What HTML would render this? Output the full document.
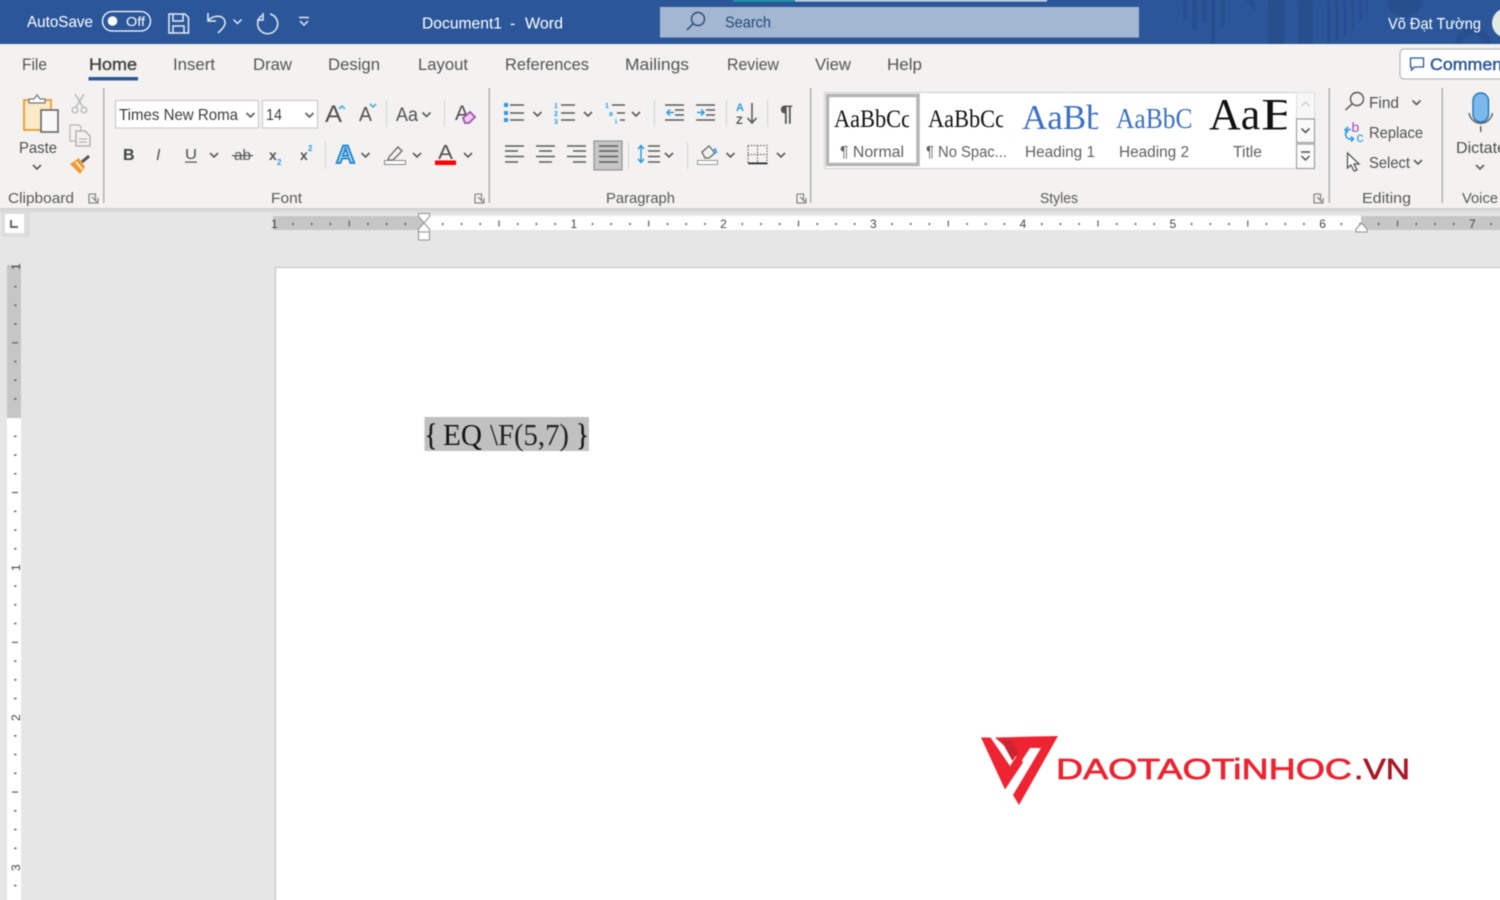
<!DOCTYPE html>
<html><head><meta charset="utf-8"><title>Document1 - Word</title>
<style>
html,body{margin:0;padding:0;width:1500px;height:900px;overflow:hidden;background:#e6e6e6}
#w{position:absolute;left:0;top:0;width:1500px;height:900px;overflow:hidden}
svg{display:block;position:absolute;left:-10px;top:-10px;filter:blur(.45px)}
text{font-family:"Liberation Sans",sans-serif;fill:#505050;font-size:16px}
.t{fill:#fff;font-size:16px}
.g{font-size:14.5px;fill:#5a5a5a}
.tab{font-size:17px;fill:#555}
.sf{font-family:"Liberation Serif",serif}
.ln{fill:none;stroke:#5c5c5c;stroke-width:1.6}
.bl{fill:#2e9ae0}
</style></head><body><div id="w">
<svg width="1520" height="920" viewBox="-10 -10 1520 920" xmlns="http://www.w3.org/2000/svg">
<defs>
<path id="c" d="M-4-2 0 2 4-2" fill="none" stroke="#5a5a5a" stroke-width="1.600"/>
<path id="lc" d="M0 0h6.500v7M0 0v9h9V4M3 3l5 5" fill="none" stroke="#777" stroke-width="1.100"/>
<linearGradient id="sh" x1="0" x2="0" y1="0" y2="1"><stop offset="0" stop-color="#cfcfcf"/><stop offset="1" stop-color="#e6e6e6"/></linearGradient>
<pattern id="rt" patternUnits="userSpaceOnUse" x="424" y="216" width="149.76" height="14">
<rect x="18" y="7" width="1.500" height="2" fill="#555"/><rect x="36.700" y="7" width="1.500" height="2" fill="#555"/><rect x="55.400" y="7" width="1.500" height="2" fill="#555"/><rect x="74.300" y="4.500" width="1.300" height="6" fill="#666"/><rect x="93" y="7" width="1.500" height="2" fill="#555"/><rect x="111.700" y="7" width="1.500" height="2" fill="#555"/><rect x="130.400" y="7" width="1.500" height="2" fill="#555"/>
</pattern>
<pattern id="vt" patternUnits="userSpaceOnUse" x="7" y="417.600" width="14" height="149.76">
<rect x="7" y="18" width="2.500" height="1.500" fill="#666"/><rect x="7" y="36.700" width="2.500" height="1.500" fill="#666"/><rect x="7" y="55.400" width="2.500" height="1.500" fill="#666"/><rect x="5" y="74.300" width="6" height="1.300" fill="#666"/><rect x="7" y="93" width="2.500" height="1.500" fill="#666"/><rect x="7" y="111.700" width="2.500" height="1.500" fill="#666"/><rect x="7" y="130.400" width="2.500" height="1.500" fill="#666"/>
</pattern>
<clipPath id="c1"><rect x="830" y="95" width="79" height="45"/></clipPath>
<clipPath id="c2"><rect x="924" y="95" width="79" height="45"/></clipPath>
<clipPath id="c3"><rect x="1018" y="95" width="80" height="45"/></clipPath>
<clipPath id="c4"><rect x="1112" y="95" width="81" height="45"/></clipPath>
<clipPath id="c5"><rect x="1205" y="92" width="81.500" height="48"/></clipPath>
</defs>

<!-- backgrounds -->
<rect x="-10" y="-10" width="1520" height="920" fill="#e6e6e6"/>
<rect x="-10" y="-10" width="1520" height="54" fill="#2b579a"/>

<!-- title bar decoration -->
<g fill="#274f8d">
<rect x="1183" y="0" width="4.500" height="20"/><rect x="1192" y="0" width="5" height="30"/><rect x="1202" y="0" width="5" height="22"/><rect x="1211" y="0" width="4.500" height="44"/><rect x="1221" y="0" width="4.500" height="26"/>
<path d="M1245 0h10v12zM1268 0h17v44h-17zM1298 0h15v44h-15zM1327 0h3.500v44h-3.500zM1335 0h3.500v40h-3.500zM1343 0h3.500v36h-3.500zM1351 0h3v30h-3zM1359 0h3v20h-3zM1366 0h2v12h-2z"/>
<path d="M1387 0a18 17 0 0 0 36 0z"/>
</g>
<circle cx="1473" cy="46" r="15" fill="none" stroke="#274f8d" stroke-width="7"/>
<rect x="733" y="0" width="62" height="1.500" fill="#17a9a9"/><rect x="795" y="0" width="252" height="1.500" fill="#e8edf5"/>

<rect x="-10" y="44" width="1520" height="164" fill="#f3f2f1"/>
<rect x="-10" y="208" width="1520" height="6" fill="url(#sh)"/>

<!-- title bar -->
<text class="t" x="27" y="27" textLength="66" lengthAdjust="spacingAndGlyphs">AutoSave</text>
<rect x="102.500" y="11.500" width="48" height="19.500" rx="9.700" fill="none" stroke="#fff" stroke-width="1.300"/>
<circle cx="112.500" cy="21" r="4.800" fill="#fff"/>
<text class="t" x="126" y="26" style="font-size:13px" textLength="19" lengthAdjust="spacingAndGlyphs">Off</text>
<path d="M169 14h16l3.500 3.500V33H169zM173 14v7h10v-7M173 33v-7h11v7" fill="none" stroke="#e6ecf5" stroke-width="1.500"/>
<path d="M208 13v8h8M208 21c4-6 16-7 17 1 .5 4-3 7-7 11" fill="none" stroke="#e6ecf5" stroke-width="1.500"/>
<path d="M233.500 19.500l4 4 4-4" fill="none" stroke="#e6ecf5" stroke-width="1.500"/>
<path d="M262 15.500A10 10 0 1 0 270 14M263 13v7h-6" fill="none" stroke="#e6ecf5" stroke-width="1.500"/>
<path d="M299 17.500h10M300 21l4 4 4-4" fill="none" stroke="#e6ecf5" stroke-width="1.500"/>
<text class="t" x="422" y="28.500" textLength="80" lengthAdjust="spacingAndGlyphs">Document1</text>
<text class="t" x="510" y="28.500">-</text>
<text class="t" x="525" y="28.500" textLength="38" lengthAdjust="spacingAndGlyphs">Word</text>
<rect x="660" y="7" width="479" height="30.500" fill="#a3b7d2"/>
<circle cx="698" cy="19" r="6.500" fill="none" stroke="#2b4a78" stroke-width="1.400"/><path d="M693 24l-6 6" stroke="#2b4a78" stroke-width="1.500"/>
<text x="725" y="27.500" textLength="46" lengthAdjust="spacingAndGlyphs" style="fill:#254a7e">Search</text>
<text class="t" x="1388" y="29" textLength="93" lengthAdjust="spacingAndGlyphs" style="font-family:'Liberation Sans','DejaVu Sans',sans-serif">Võ Đạt Tường</text>
<circle cx="1507" cy="23" r="15" fill="#e3ebe2"/>

<!-- tabs -->
<g>
<text class="tab" x="22" y="70" textLength="25" lengthAdjust="spacingAndGlyphs">File</text>
<text class="tab" x="89" y="70" textLength="48" lengthAdjust="spacingAndGlyphs" style="fill:#444;stroke:#444;stroke-width:.4">Home</text>
<rect x="88.500" y="77" width="49.500" height="3.500" fill="#2b579a"/>
<text class="tab" x="173" y="70" textLength="42" lengthAdjust="spacingAndGlyphs">Insert</text>
<text class="tab" x="253" y="70" textLength="39" lengthAdjust="spacingAndGlyphs">Draw</text>
<text class="tab" x="328" y="70" textLength="52" lengthAdjust="spacingAndGlyphs">Design</text>
<text class="tab" x="418" y="70" textLength="50" lengthAdjust="spacingAndGlyphs">Layout</text>
<text class="tab" x="505" y="70" textLength="84" lengthAdjust="spacingAndGlyphs">References</text>
<text class="tab" x="625" y="70" textLength="64" lengthAdjust="spacingAndGlyphs">Mailings</text>
<text class="tab" x="727" y="70" textLength="52" lengthAdjust="spacingAndGlyphs">Review</text>
<text class="tab" x="815" y="70" textLength="36" lengthAdjust="spacingAndGlyphs">View</text>
<text class="tab" x="887" y="70" textLength="35" lengthAdjust="spacingAndGlyphs">Help</text>
</g>
<rect x="1400" y="49" width="130" height="30" rx="4" fill="#fff" stroke="#b9b9b9" stroke-width="1.200"/>
<path d="M1410.500 58h13v9h-9l-3 3v-3h-1z" fill="none" stroke="#2b579a" stroke-width="1.300"/>
<text x="1430" y="70" textLength="86" lengthAdjust="spacingAndGlyphs" style="fill:#2b579a;font-size:17px;stroke:#2b579a;stroke-width:.45">Comments</text>

<!-- separators -->
<g fill="#b3b3b3">
<rect x="103" y="88" width="1.500" height="115"/><rect x="488.500" y="88" width="1.500" height="115"/><rect x="810" y="88" width="1.500" height="115"/><rect x="1328.500" y="88" width="1.500" height="115"/><rect x="1441.500" y="88" width="1.500" height="115"/>
</g>
<g fill="#d4d4d4">
<rect x="386" y="100" width="1" height="27"/><rect x="444" y="100" width="1" height="27"/><rect x="325" y="142" width="1" height="27"/>
<rect x="654" y="100" width="1" height="27"/><rect x="726" y="100" width="1" height="27"/><rect x="767" y="100" width="1" height="27"/><rect x="628" y="142" width="1" height="27"/><rect x="687" y="142" width="1" height="27"/>
</g>

<!-- clipboard -->
<rect x="24" y="100" width="27" height="30" fill="#fce9c8" stroke="#eb9b2d" stroke-width="1.800"/>
<path d="M29 103v-4h5l3-4 3 4h5v4z" fill="#fff" stroke="#777" stroke-width="1.200"/>
<rect x="41" y="110" width="17" height="22" fill="#f8f8f8" stroke="#666" stroke-width="1.600"/>
<text x="19" y="153" textLength="38" lengthAdjust="spacingAndGlyphs" style="font-size:16px">Paste</text>
<use href="#c" x="37" y="167"/>
<path d="M75 94l8 13M84 94l-8 13" stroke="#b8b8b8" stroke-width="1.500" fill="none"/><circle cx="75" cy="110" r="2.800" fill="none" stroke="#b8b8b8" stroke-width="1.300"/><circle cx="84" cy="110" r="2.800" fill="none" stroke="#b8b8b8" stroke-width="1.300"/>
<path d="M70 125h9l2 2v14H70z" fill="#f3f2f1" stroke="#b8b8b8" stroke-width="1.300"/><path d="M76 131h9l5 5v10H76z" fill="#f3f2f1" stroke="#aaa" stroke-width="1.300"/><path d="M79 139h8M79 142h8" stroke="#aaa"/>
<path d="M70 164l9-6 6 9-5 7z" fill="#ee9a36"/><path d="M82 162l7-6" stroke="#555" stroke-width="3"/><path d="M76 162l6 7" stroke="#fff" stroke-width="1.500"/>
<text class="g" x="8" y="203" textLength="66" lengthAdjust="spacingAndGlyphs">Clipboard</text>
<use href="#lc" x="89" y="194"/>

<!-- font -->
<rect x="115.500" y="100.500" width="143" height="27.500" fill="#fff" stroke="#c8c8c8" stroke-width="1.100"/>
<rect x="262.500" y="100.500" width="55" height="27.500" fill="#fff" stroke="#c8c8c8" stroke-width="1.100"/>
<text x="119" y="120" textLength="119" lengthAdjust="spacingAndGlyphs" style="fill:#3d3d3d">Times New Roma</text>
<use href="#c" x="250.500" y="115"/>
<text x="266" y="120" textLength="16" lengthAdjust="spacingAndGlyphs" style="fill:#3d3d3d">14</text>
<use href="#c" x="309.500" y="115"/>
<text x="325" y="122" style="font-size:24px" textLength="17" lengthAdjust="spacingAndGlyphs">A</text>
<path d="M339 109l3-3 3 3" stroke="#3ba1dc" stroke-width="1.500" fill="none"/>
<text x="359" y="121" style="font-size:20px" textLength="13" lengthAdjust="spacingAndGlyphs">A</text>
<path d="M370 104l3 3 3-3" stroke="#3ba1dc" stroke-width="1.500" fill="none"/>
<text x="396" y="121" style="font-size:19px" textLength="22" lengthAdjust="spacingAndGlyphs">Aa</text>
<use href="#c" x="426.500" y="114.500"/>
<text x="455" y="120" style="font-size:21px" textLength="14" lengthAdjust="spacingAndGlyphs">A</text>
<path d="M463 118l7-6 5 5-6 6h-4z" fill="#ead0ee" stroke="#a64fb5" stroke-width="1.800"/>

<text x="123" y="160" style="font-weight:bold;font-size:16px;fill:#444">B</text>
<text x="156" y="160" style="font-style:italic;font-size:16px;fill:#555">I</text>
<text x="185" y="159" style="font-size:15px" textLength="12" lengthAdjust="spacingAndGlyphs">U</text><rect x="185" y="161.500" width="12" height="1.200" fill="#555"/>
<use href="#c" x="214" y="155"/>
<text x="234" y="160" style="font-size:15px" textLength="17" lengthAdjust="spacingAndGlyphs">ab</text><rect x="232" y="155" width="21" height="1.200" fill="#555"/>
<text x="269" y="160" style="font-weight:bold;font-size:14px;fill:#555">x</text><text x="277" y="165" style="font-size:8px;fill:#2e9ae0;font-weight:bold">2</text>
<text x="300" y="160" style="font-weight:bold;font-size:14px;fill:#555">x</text><text x="308" y="151" style="font-size:8px;fill:#2e9ae0;font-weight:bold">2</text>
<text x="336" y="163" style="font-size:25px;font-weight:bold;fill:#bcdcf4;stroke:#1f84cf;stroke-width:1.800" textLength="19" lengthAdjust="spacingAndGlyphs">A</text>
<use href="#c" x="365.500" y="155"/>
<path d="M389 157l9-10 4 4-9 9h-5z" fill="none" stroke="#666" stroke-width="1.300"/><rect x="384.500" y="160.500" width="21" height="4" fill="#fff" stroke="#888"/>
<use href="#c" x="417" y="155"/>
<text x="438" y="159" style="font-size:20px" textLength="15" lengthAdjust="spacingAndGlyphs">A</text>
<rect x="435" y="160.500" width="21" height="4.500" fill="#f00"/>
<use href="#c" x="468" y="155"/>
<text class="g" x="271" y="203" textLength="31" lengthAdjust="spacingAndGlyphs">Font</text>
<use href="#lc" x="475" y="194"/>

<!-- paragraph row 1 -->
<g fill="#2e9ae0"><rect x="504" y="103" width="4" height="4"/><rect x="504" y="111" width="4" height="4"/><rect x="504" y="118" width="4" height="4"/></g>
<path class="ln" d="M510 105h14M510 113h14M510 120h14M561 105h14M561 113h14M561 120h14M612 105h13M617 113h8M620 120h5"/>
<text x="554" y="108" style="font-size:7px;font-weight:bold;fill:#2e9ae0">1</text><text x="554" y="116" style="font-size:7px;font-weight:bold;fill:#2e9ae0">2</text><text x="554" y="124" style="font-size:7px;font-weight:bold;fill:#2e9ae0">3</text>
<text x="605" y="108" style="font-size:7px;font-weight:bold;fill:#2e9ae0">1</text><text x="609" y="116" style="font-size:7px;font-weight:bold;fill:#2e9ae0">a</text><text x="615" y="124" style="font-size:7px;font-weight:bold;fill:#2e9ae0">i</text>
<use href="#c" x="537.500" y="114"/><use href="#c" x="588" y="114"/><use href="#c" x="636" y="114"/>
<path class="ln" d="M665 105h19M675 110h9M675 115h9M665 120h19M696 105h19M706 110h9M706 115h9M696 120h19"/>
<path d="M674 112.500h-7M670 109.500l-3 3 3 3M697 112.500h7M701 109.500l3 3-3 3" fill="none" stroke="#2e9ae0" stroke-width="1.500"/>
<text x="736" y="111" style="font-size:11px;font-weight:bold;fill:#2e9ae0">A</text>
<text x="736" y="124" style="font-size:11px;font-weight:bold;fill:#555">Z</text>
<path d="M752 103v20M747.500 118l4.500 5 4.500-5" fill="none" stroke="#555" stroke-width="1.500"/>
<text x="780" y="121" style="font-size:22px;font-weight:bold;fill:#555" textLength="13" lengthAdjust="spacingAndGlyphs">¶</text>

<!-- paragraph row 2 -->
<rect x="594" y="141" width="28" height="29" fill="#c6c6c6" stroke="#8f8f8f" stroke-width="1.100"/>
<path class="ln" d="M505 146h19M505 151h13M505 156.500h19M505 162h13M536 146h19M539 151h13M536 156.500h19M539 162h13M567 146h19M573 151h13M567 156.500h19M573 162h13M599 146h19M599 151h19M599 156.500h19M599 162h19"/>
<path d="M641 158v-12M638 149l3-3.500 3 3.500M641 152v10M638 159l3 3.500 3-3.500" fill="none" stroke="#2e9ae0" stroke-width="1.500"/>
<path class="ln" d="M648 146h12M648 151h12M648 156.500h12M648 162h12"/>
<use href="#c" x="669" y="155"/>
<path d="M702 152l7-6 6 7-6 5h-4z" fill="none" stroke="#666" stroke-width="1.300"/><path d="M714 153a4 4 0 0 1 1-4l2 4" fill="none" stroke="#2e9ae0" stroke-width="1.500"/><rect x="697.500" y="160.500" width="20" height="4" fill="#fff" stroke="#999"/>
<use href="#c" x="730.500" y="155"/>
<path d="M748 145.500h19v18h-19zM748 154.500h19M757.500 145.500v18" fill="none" stroke="#555" stroke-dasharray="1.500 1.500"/><rect x="748" y="162.500" width="19.500" height="1.700" fill="#222"/>
<use href="#c" x="781" y="155"/>
<text class="g" x="606" y="203" textLength="69" lengthAdjust="spacingAndGlyphs">Paragraph</text>
<use href="#lc" x="797" y="194"/>

<!-- styles -->
<rect x="824.500" y="92.500" width="490" height="76" fill="#fff" stroke="#d2d2d2" stroke-width="1.100"/>
<rect x="827.500" y="95.500" width="90.500" height="69" fill="#fff" stroke="#b5b5b5" stroke-width="3.500"/>
<g clip-path="url(#c1)"><text x="834" y="127" class="sf" textLength="77" lengthAdjust="spacingAndGlyphs" style="font-size:25px;fill:#111">AaBbCc</text></g>
<g clip-path="url(#c2)"><text x="928" y="127" class="sf" textLength="77" lengthAdjust="spacingAndGlyphs" style="font-size:25px;fill:#111">AaBbCc</text></g>
<g clip-path="url(#c3)"><text x="1022" y="129" class="sf" style="font-size:35px;fill:#3b6fc4">AaBb</text></g>
<g clip-path="url(#c4)"><text x="1116" y="128" class="sf" textLength="76.500" lengthAdjust="spacingAndGlyphs" style="font-size:29px;fill:#3b6fc4">AaBbC</text></g>
<g clip-path="url(#c5)"><text x="1209" y="129" class="sf" style="font-size:44px;fill:#111">Aa</text><text transform="translate(1261 129) scale(1.3 1)" class="sf" style="font-size:44px;fill:#111">B</text></g>
<text x="840" y="157" textLength="64" lengthAdjust="spacingAndGlyphs" style="font-size:15.500px;fill:#606060">¶ Normal</text>
<text x="926" y="157" textLength="81" lengthAdjust="spacingAndGlyphs" style="font-size:15.500px;fill:#606060">¶ No Spac...</text>
<text x="1025" y="157" textLength="70" lengthAdjust="spacingAndGlyphs" style="font-size:15.500px;fill:#606060">Heading 1</text>
<text x="1119" y="157" textLength="70" lengthAdjust="spacingAndGlyphs" style="font-size:15.500px;fill:#606060">Heading 2</text>
<text x="1233" y="157" textLength="29" lengthAdjust="spacingAndGlyphs" style="font-size:15.500px;fill:#606060">Title</text>
<rect x="1296.500" y="92.500" width="18" height="26" fill="#f7f7f7" stroke="#dcdcdc"/>
<path d="M1301.500 106l4-4 4 4" fill="none" stroke="#cfcfcf" stroke-width="1.500"/>
<rect x="1296.500" y="119" width="18" height="23.500" fill="#fafafa" stroke="#9a9a9a" stroke-width="1.100"/>
<use href="#c" x="1305.500" y="130.500"/>
<rect x="1296.500" y="144" width="18" height="24.500" fill="#fafafa" stroke="#9a9a9a" stroke-width="1.100"/>
<path d="M1301 152h9M1301.500 156l4 4 4-4" fill="none" stroke="#555" stroke-width="1.500"/>
<text class="g" x="1040" y="203" textLength="38" lengthAdjust="spacingAndGlyphs">Styles</text>
<use href="#lc" x="1314" y="194"/>

<!-- editing -->
<circle cx="1357" cy="99" r="6.500" fill="none" stroke="#555" stroke-width="1.400"/><path d="M1352 104l-6.500 6" stroke="#555" stroke-width="1.500"/>
<text x="1369" y="108" textLength="30" lengthAdjust="spacingAndGlyphs">Find</text>
<use href="#c" x="1416.500" y="102.500"/>
<text x="1351.500" y="132" style="font-size:14px;fill:#b04bc0">b</text><text x="1356.500" y="142" style="font-size:14px;fill:#2e9ae0">c</text>
<path d="M1351 129.500h-2a5 5 0 0 0 0 9.500h3M1348 127l-3 3 3 2.500M1351 136.500l2.500 2.500-2.500 2.500" fill="none" stroke="#2e9ae0" stroke-width="1.600"/>
<text x="1369" y="138" textLength="54" lengthAdjust="spacingAndGlyphs">Replace</text>
<path d="M1347.500 153v15l3.500-3 3 6 3-1-3-6h5z" fill="#fff" stroke="#555" stroke-width="1.300"/>
<text x="1369" y="168" textLength="41" lengthAdjust="spacingAndGlyphs">Select</text>
<use href="#c" x="1418" y="162"/>
<text class="g" x="1362" y="203" textLength="49" lengthAdjust="spacingAndGlyphs">Editing</text>

<!-- voice -->
<rect x="1473" y="93" width="15.500" height="29" rx="7.700" fill="#7cb9ea" stroke="#1b76c4" stroke-width="1.400"/>
<path d="M1469 113a12 13 0 0 0 23.500 0M1480.800 126v6" fill="none" stroke="#666" stroke-width="1.500"/>
<text x="1456" y="153" textLength="50" lengthAdjust="spacingAndGlyphs">Dictate</text>
<use href="#c" x="1480" y="167"/>
<text class="g" x="1462" y="203" textLength="36" lengthAdjust="spacingAndGlyphs">Voice</text>

<!-- horizontal ruler -->
<rect x="2" y="211" width="28" height="26" fill="#dcdcdc"/>
<rect x="5" y="214" width="19" height="19" fill="#fff"/>
<path d="M11 220v7h7" fill="none" stroke="#666" stroke-width="2"/>
<rect x="273" y="216" width="151" height="14" fill="#c6c6c6"/>
<rect x="424" y="216" width="937" height="14" fill="#fff"/>
<rect x="1361" y="216" width="149" height="14" fill="#c6c6c6"/>
<rect x="274" y="216" width="1236" height="14" fill="url(#rt)"/>
<g text-anchor="middle">
<text x="274.500" y="228" style="font-size:12px;fill:#444">1</text><text x="573.800" y="228" style="font-size:12px;fill:#444">1</text><text x="723.500" y="228" style="font-size:12px;fill:#444">2</text><text x="873.300" y="228" style="font-size:12px;fill:#444">3</text><text x="1023" y="228" style="font-size:12px;fill:#444">4</text><text x="1172.800" y="228" style="font-size:12px;fill:#444">5</text><text x="1322.600" y="228" style="font-size:12px;fill:#444">6</text><text x="1472.300" y="228" style="font-size:12px;fill:#444">7</text>
</g>
<path d="M418.500 213.500h11v3l-5.500 6.500-5.500-6.500zM424 223l5.500 6v3h-11v-3zM418.500 232h11v8h-11z" fill="#fdfdfd" stroke="#909090" stroke-width="1"/>
<path d="M1361.500 223l5.500 6v3h-11v-3z" fill="#fdfdfd" stroke="#909090" stroke-width="1"/>

<!-- vertical ruler -->
<rect x="7" y="265" width="14" height="153" fill="#c6c6c6"/>
<rect x="7" y="418" width="14" height="492" fill="#fff"/>
<rect x="7" y="265" width="14" height="645" fill="url(#vt)"/>
<g>
<text transform="translate(20 270) rotate(-90)" style="font-size:12px;fill:#444">1</text>
<text transform="translate(20 571) rotate(-90)" style="font-size:12px;fill:#444">1</text>
<text transform="translate(20 721) rotate(-90)" style="font-size:12px;fill:#444">2</text>
<text transform="translate(20 871) rotate(-90)" style="font-size:12px;fill:#444">3</text>
</g>

<!-- page -->
<rect x="275.500" y="267.500" width="1260" height="670" fill="#fff" stroke="#c6c6c6" stroke-width="1.200"/>
<rect x="424.500" y="417" width="164.500" height="34" fill="#c0c0c0"/>
<g>
<text class="sf" x="425" y="445" style="font-size:31px;fill:#151515;stroke:#151515;stroke-width:.5" textLength="12" lengthAdjust="spacingAndGlyphs">{</text>
<text class="sf" x="443" y="445" textLength="39" lengthAdjust="spacingAndGlyphs" style="font-size:31px;fill:#151515">EQ</text>
<text class="sf" x="490" y="445" textLength="79" lengthAdjust="spacingAndGlyphs" style="font-size:31px;fill:#222">\F(5,7)</text>
<text class="sf" x="576.500" y="445" style="font-size:31px;fill:#151515;stroke:#151515;stroke-width:.5" textLength="12" lengthAdjust="spacingAndGlyphs">}</text>
</g>

<!-- logo -->
<g>
<path d="M981 737.500h9.500L1010 766l8-12 5 8.500-18 27z" fill="#ee2432"/>
<path d="M995 737.500l63-1.500-39 69-6-10 28-47-11 0-8.500 13z" fill="#ee2432"/>
<path d="M1001 740h10l7.500 11.500-6 9.500z" fill="#cc2430"/>
<text x="1056" y="779" textLength="296" lengthAdjust="spacingAndGlyphs" style="font-size:29px;fill:#ec2330;stroke:#ec2330;stroke-width:.7">DAOTAOTiNHOC</text>
<text x="1354" y="779" textLength="56" lengthAdjust="spacingAndGlyphs" style="font-size:29px;fill:#a81825;stroke:#a81825;stroke-width:.7">.VN</text>
</g>
</svg>
</div></body></html>
